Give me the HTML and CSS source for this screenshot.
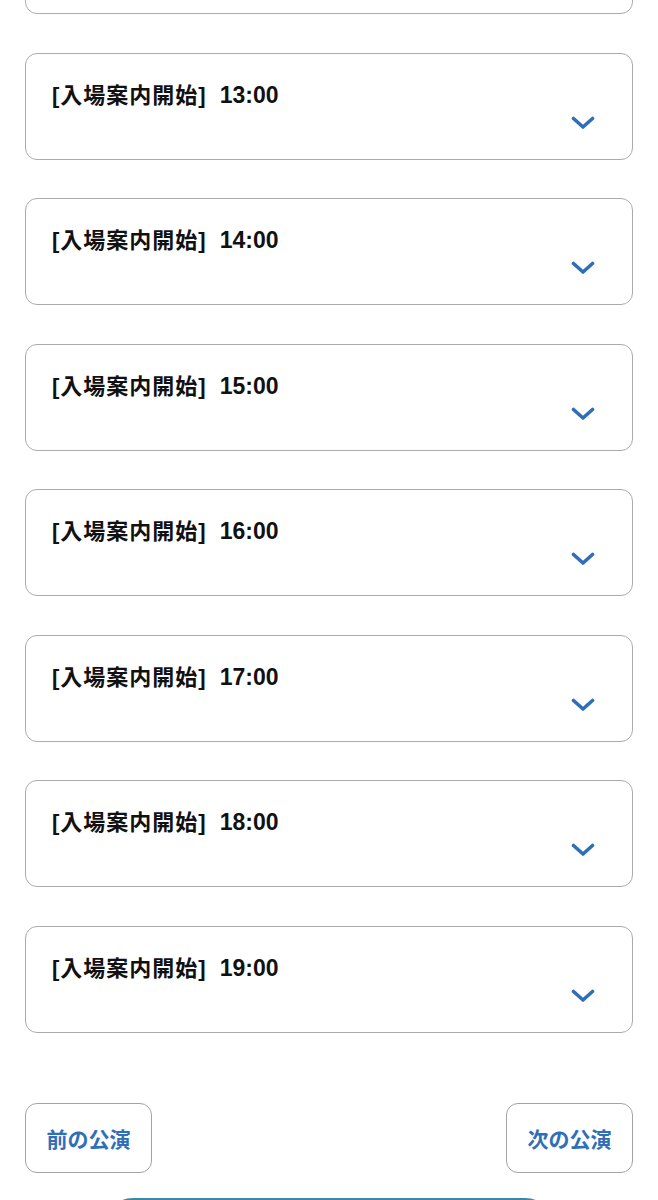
FILE: index.html
```html
<!DOCTYPE html>
<html lang="ja">
<head>
    <meta charset="utf-8">
    <title>公演スケジュール</title>
    <link rel="stylesheet" href="styles.css">
</head>
<body>
    <div class="schedule">
        <div class="slot slot-cut"></div>
        <div class="slot">
            <div class="slot-title">[入場案内開始] <span class="slot-time">13:00</span></div>
            <div class="slot-toggle"><svg viewBox="0 0 24 14" width="24" height="14"><path d="M2.5 2.5 L12 11 L21.5 2.5" /></svg></div>
        </div>
        <div class="slot">
            <div class="slot-title">[入場案内開始] <span class="slot-time">14:00</span></div>
            <div class="slot-toggle"><svg viewBox="0 0 24 14" width="24" height="14"><path d="M2.5 2.5 L12 11 L21.5 2.5" /></svg></div>
        </div>
        <div class="slot">
            <div class="slot-title">[入場案内開始] <span class="slot-time">15:00</span></div>
            <div class="slot-toggle"><svg viewBox="0 0 24 14" width="24" height="14"><path d="M2.5 2.5 L12 11 L21.5 2.5" /></svg></div>
        </div>
        <div class="slot">
            <div class="slot-title">[入場案内開始] <span class="slot-time">16:00</span></div>
            <div class="slot-toggle"><svg viewBox="0 0 24 14" width="24" height="14"><path d="M2.5 2.5 L12 11 L21.5 2.5" /></svg></div>
        </div>
        <div class="slot">
            <div class="slot-title">[入場案内開始] <span class="slot-time">17:00</span></div>
            <div class="slot-toggle"><svg viewBox="0 0 24 14" width="24" height="14"><path d="M2.5 2.5 L12 11 L21.5 2.5" /></svg></div>
        </div>
        <div class="slot">
            <div class="slot-title">[入場案内開始] <span class="slot-time">18:00</span></div>
            <div class="slot-toggle"><svg viewBox="0 0 24 14" width="24" height="14"><path d="M2.5 2.5 L12 11 L21.5 2.5" /></svg></div>
        </div>
        <div class="slot">
            <div class="slot-title">[入場案内開始] <span class="slot-time">19:00</span></div>
            <div class="slot-toggle"><svg viewBox="0 0 24 14" width="24" height="14"><path d="M2.5 2.5 L12 11 L21.5 2.5" /></svg></div>
        </div>
    </div>
    <div class="pager">
        <a class="pager-btn" href="#">前の公演</a>
        <a class="pager-btn" href="#">次の公演</a>
    </div>
    <div class="main-action"></div>
</body>
</html>
```

FILE: styles.css
```css
html, body
{
    margin: 0;
    padding: 0;
    background: #fff;
    overflow: hidden;
}

body
{
    font-family: "Liberation Sans", "Noto Sans CJK JP", sans-serif;
    color: #111;
    padding: 0 25px;
}

.schedule
{
    display: flex;
    flex-direction: column;
    gap: 38.5px;
    margin-top: -93px;
}

.slot
{
    box-sizing: border-box;
    height: 107px;
    border: 1.5px solid #ababab;
    border-radius: 12px;
    padding: 26px 37px 0 26px;
    display: flex;
    flex-direction: column;
}

.slot-title
{
    font-size: 22px;
    font-weight: bold;
    line-height: 31px;
    letter-spacing: 1px;
    word-spacing: 6px;
}

.slot-time
{
    font-size: 23px;
    letter-spacing: 0;
}

.slot-toggle
{
    display: flex;
    justify-content: flex-end;
    margin-top: 5px;
}

.slot-toggle svg
{
    display: block;
}

.slot-toggle path
{
    fill: none;
    stroke: #2f6fb8;
    stroke-width: 3.6;
    stroke-linecap: round;
    stroke-linejoin: round;
}

.pager
{
    display: flex;
    justify-content: space-between;
    margin-top: 70.5px;
}

.pager-btn
{
    box-sizing: border-box;
    width: 127px;
    height: 70px;
    border: 1.5px solid #a3a3a3;
    border-radius: 12px;
    display: flex;
    align-items: center;
    justify-content: center;
    font-size: 21px;
    font-weight: bold;
    color: #2f6fb8;
    text-decoration: none;
}

.main-action
{
    margin: 25px auto 0;
    width: 452px;
    height: 60px;
    border-radius: 30px;
    background: #3f86a4;
}
```
